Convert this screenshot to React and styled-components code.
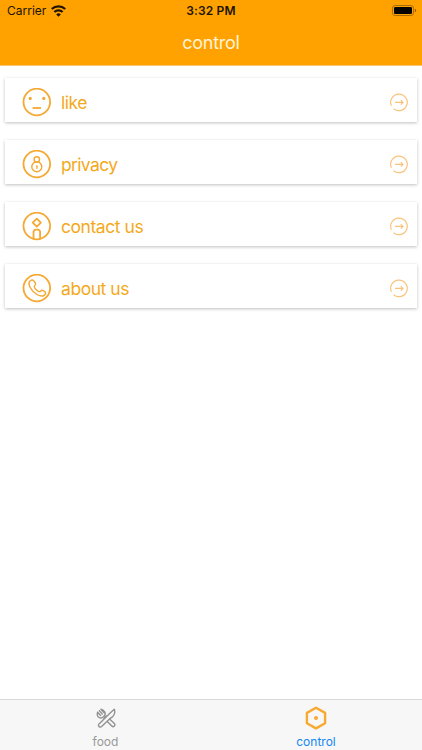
import React from "react";
import styled, { createGlobalStyle } from "styled-components";

const GlobalStyle = createGlobalStyle`
  * { box-sizing: border-box; }
  body { margin: 0; background: #fff; font-family: Inter, "Liberation Sans", sans-serif; }
`;

const Screen = styled.div`
  display: flex;
  flex-direction: column;
  width: 100%;
  height: 100vh;
  overflow: hidden;
  background: #fff;
`;

const Header = styled.header`
  flex: none;
  height: 66px;
  background: #ffa200;
  border-bottom: 1px solid #f9c673;
`;

const StatusBar = styled.div`
  display: grid;
  grid-template-columns: 1fr auto 1fr;
  align-items: center;
  height: 22px;
  padding: 0 5px 0 7px;
  color: #201400;
`;

const Carrier = styled.div`
  display: flex;
  align-items: center;
  gap: 5px;
  font-size: 12px;
  line-height: 22px;
`;

const Clock = styled.div`
  margin-left: -2px;
  font-size: 12px;
  font-weight: 600;
  line-height: 22px;
  letter-spacing: 0.15px;
`;

const BatteryIcon = styled.svg`
  justify-self: end;
  margin-top: -2px;
`;

const Title = styled.h1`
  margin: 0;
  color: #fff3d6;
  font-size: 18px;
  font-weight: 400;
  line-height: 42px;
  letter-spacing: -0.25px;
  text-align: center;
`;

const List = styled.main`
  flex: 1;
  display: flex;
  flex-direction: column;
  gap: 18px;
  padding: 12px 5.5px 12px 5px;
`;

const Card = styled.div`
  display: flex;
  align-items: center;
  height: 44px;
  padding: 5px 8px 0 17px;
  background: #fff;
  box-shadow: 0 1px 3px rgba(0, 0, 0, 0.25);
`;

const Label = styled.span`
  flex: 1;
  margin-left: 9px;
  color: #f4a91b;
  font-size: 17.5px;
  line-height: 24px;
  letter-spacing: ${(p) => p.$spacing}px;
`;

const TabBar = styled.nav`
  flex: none;
  display: grid;
  grid-template-columns: 1fr 1fr;
  height: 51px;
  background: #f7f7f7;
  border-top: 1px solid #d8d8d8;
`;

const Tab = styled.div`
  display: flex;
  flex-direction: column;
  align-items: center;
  padding: 6px ${(p) => (p.$active ? 1 : 0)}px 0 0;
  color: ${(p) => (p.$active ? "#1488f2" : "#999")};
  font-size: 12px;
  line-height: 16px;
`;

const TabIcon = styled.svg`
  flex: none;
  margin-bottom: 4px;
`;

const glyphs = {
  like: (
    <>
      <circle cx="8.2" cy="11" r="1.6" fill="#f5a62c" stroke="none" />
      <circle cx="21.8" cy="11" r="1.6" fill="#f5a62c" stroke="none" />
      <path d="M10.6 20.6h8.4" strokeWidth="1.8" />
    </>
  ),
  privacy: (
    <>
      <circle cx="14.8" cy="17.3" r="5" strokeWidth="1.4" />
      <circle cx="14.8" cy="10" r="2.7" strokeWidth="1.4" />
      <path d="M14.9 15.9v3.4" strokeWidth="1.4" />
    </>
  ),
  contact: (
    <>
      <path d="M14.8 7.2l4.1 4-4.1 4-4.1-4z" strokeWidth="1.8" />
      <path d="M11.5 27.8v-7.2a2.3 2.3 0 0 1 2.3-2.3h2a2.3 2.3 0 0 1 2.3 2.3v7.2" strokeWidth="1.8" />
    </>
  ),
  about: (
    <path
      d="M7.5 8.3c.9-1.4 2.8-2.4 3.9-1.3l2 2.6c.7 1 .1 1.7-.6 2.5-.9.9-.8 1.6 0 2.7.9 1.3 2.1 2.3 3.5 3.1.9.5 1.7.4 2.4-.2.8-.8 1.6-1 2.5-.5l1.8 1.2c1.3.9.5 2.6-.9 3.5-1.9 1.3-4.5.7-7.1-.8-3.1-1.8-5.6-4.4-7.1-7.5-.9-1.9-1.3-3.8-.4-5.3z"
      strokeWidth="1.4"
    />
  ),
};

const RowIcon = ({ name }) => (
  <svg width="30" height="30" viewBox="0 0.6 30 30" fill="none" stroke="#f5a832" strokeLinejoin="round">
    <circle cx="14.8" cy="14.6" r="13.3" strokeWidth="1.8" />
    {glyphs[name]}
  </svg>
);

const ArrowIcon = () => (
  <svg width="20" height="20" viewBox="0 0 20 20" fill="none" stroke="#fac27a" strokeWidth="1.15">
    <path d="M2.4 12.8A8.3 8.3 0 1 1 4.6 15.7" />
    <path d="M6 9.4h8M11.8 7.2L14 9.4l-2.2 2.2" />
  </svg>
);

const rows = [
  { icon: "like", label: "like", spacing: -0.5 },
  { icon: "privacy", label: "privacy", spacing: -0.65 },
  { icon: "contact", label: "contact us", spacing: -0.45 },
  { icon: "about", label: "about us", spacing: -0.45 },
];

export default function App() {
  return (
    <Screen>
      <GlobalStyle />
      <Header>
        <StatusBar>
          <Carrier>
            Carrier
            <svg width="15" height="12" viewBox="0 0 15 12" fill="none" stroke="#201400" strokeWidth="2.3">
              <path d="M.8 4a9.6 9.6 0 0 1 13.4 0" />
              <path d="M3.4 7a5.8 5.8 0 0 1 8.2 0" />
              <path d="M7.5 11.7L5.2 9.4a3.3 3.3 0 0 1 4.6 0z" fill="#201400" stroke="none" />
            </svg>
          </Carrier>
          <Clock>3:32 PM</Clock>
          <BatteryIcon width="26" height="12" viewBox="0 0 26 12">
            <rect x="1.5" y="1.5" width="21" height="10" rx="2.7" fill="none" stroke="#a66c05" />
            <rect x="3" y="3" width="18" height="7" rx="1.3" fill="#050300" />
            <path d="M23.9 4.8q1.3.5 1.3 1.7t-1.3 1.7z" fill="#8c5b06" />
          </BatteryIcon>
        </StatusBar>
        <Title>control</Title>
      </Header>
      <List>
        {rows.map((row) => (
          <Card key={row.label}>
            <RowIcon name={row.icon} />
            <Label $spacing={row.spacing}>{row.label}</Label>
            <ArrowIcon />
          </Card>
        ))}
      </List>
      <TabBar>
        <Tab>
          <TabIcon width="24" height="24" viewBox="0 0 24 24" fill="#f7f7f7" stroke="#929292" strokeWidth="1.4" strokeLinejoin="round" strokeLinecap="round">
            <path d="M10 12.2l2.3-2.3 8.1 7.6c1.6 1.8-.9 4.3-2.6 2.6z" />
            <path d="M20.3 3.3c1.1 2.8.4 5.4-1.9 7.6l-2.6 1.8-8.2 7.8c-1.9 1.6-4.2-.8-2.6-2.6L16.4 6.8z" />
            <path d="M3.6 6.3c-.7 2.4-.1 4.3 1.4 5.2 1.7 1 3.3.7 4.8-.9s1.9-3.2.9-4.8C9.8 4.4 8.7 3.6 6.9 3.3l3 3.2M3.6 6.3l3 3.1M5.3 4.8l3 3.2" />
          </TabIcon>
          food
        </Tab>
        <Tab $active>
          <TabIcon width="24" height="24" viewBox="0 0 24 24" fill="none" stroke="#f8a930" strokeWidth="2.4" strokeLinejoin="round">
            <path d="M12 1.7l9.1 5.2v10.3L12 22.4l-9.1-5.2V6.9z" />
            <circle cx="12" cy="12" r="2" fill="#f8a930" stroke="none" />
          </TabIcon>
          control
        </Tab>
      </TabBar>
    </Screen>
  );
}
